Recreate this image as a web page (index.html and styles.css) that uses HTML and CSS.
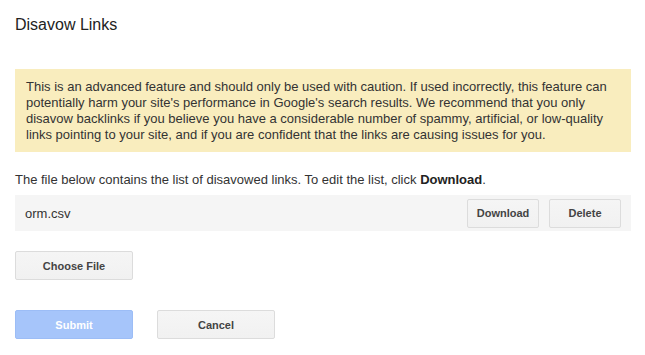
FILE: index.html
```html
<!DOCTYPE html>
<html>
<head>
<meta charset="utf-8">
<link rel="stylesheet" href="styles.css">
</head>
<body>
<div class="page">
  <h1 class="title">Disavow Links</h1>
  <div class="warning">This is an advanced feature and should only be used with caution. If used incorrectly, this feature can potentially harm your site's performance in Google's search results. We recommend that you only disavow backlinks if you believe you have a considerable number of spammy, artificial, or low-quality links pointing to your site, and if you are confident that the links are causing issues for you.</div>
  <p class="info">The file below contains the list of disavowed links. To edit the list, click <b>Download</b>.</p>
  <div class="file-row">
    <span class="file-name">orm.csv</span>
    <div class="file-actions">
      <button class="btn btn-small">Download</button>
      <button class="btn btn-small">Delete</button>
    </div>
  </div>
  <div class="choose">
    <button class="btn btn-wide">Choose File</button>
  </div>
  <div class="actions">
    <button class="btn btn-wide btn-primary" disabled>Submit</button>
    <button class="btn btn-wide">Cancel</button>
  </div>
</div>
</body>
</html>
```

FILE: styles.css
```css
html, body {
  margin: 0;
  padding: 0;
  background: #fff;
}
body {
  font-family: "Liberation Sans", Arial, sans-serif;
  color: #222;
}
.page {
  padding: 14px 14px 0 15px;
  width: 616px;
}
.title {
  margin: 0;
  font-size: 16px;
  font-weight: normal;
  line-height: 22px;
  color: #222;
}
.warning {
  margin-top: 33px;
  background: #f9edbe;
  padding: 10px 11px 9px 11px;
  font-size: 13px;
  line-height: 16px;
  color: #333;
}
.info {
  margin: 20px 0 7px 0;
  font-size: 13px;
  line-height: 16px;
  color: #333;
}
.info b {
  color: #222;
}
.file-row {
  display: flex;
  align-items: center;
  justify-content: space-between;
  background: #f5f5f5;
  height: 36px;
  padding: 0 10px;
}
.file-name {
  font-size: 13px;
  color: #333;
}
.file-actions {
  display: flex;
  gap: 10px;
}
.btn {
  font-family: "Liberation Sans", Arial, sans-serif;
  font-size: 11px;
  font-weight: bold;
  color: #444;
  height: 29px;
  border: 1px solid #dcdcdc;
  border-radius: 2px;
  background: linear-gradient(#f5f5f5, #f1f1f1);
  padding: 0;
  margin: 0;
}
.btn-small {
  width: 72px;
}
.btn-wide {
  width: 118px;
}
.choose {
  margin-top: 20px;
  display: flex;
}
.actions {
  margin-top: 30px;
  display: flex;
  gap: 24px;
}
.btn-primary {
  background: #a6c5fa;
  border-color: #9cbdf6;
  color: #fff;
}
```
